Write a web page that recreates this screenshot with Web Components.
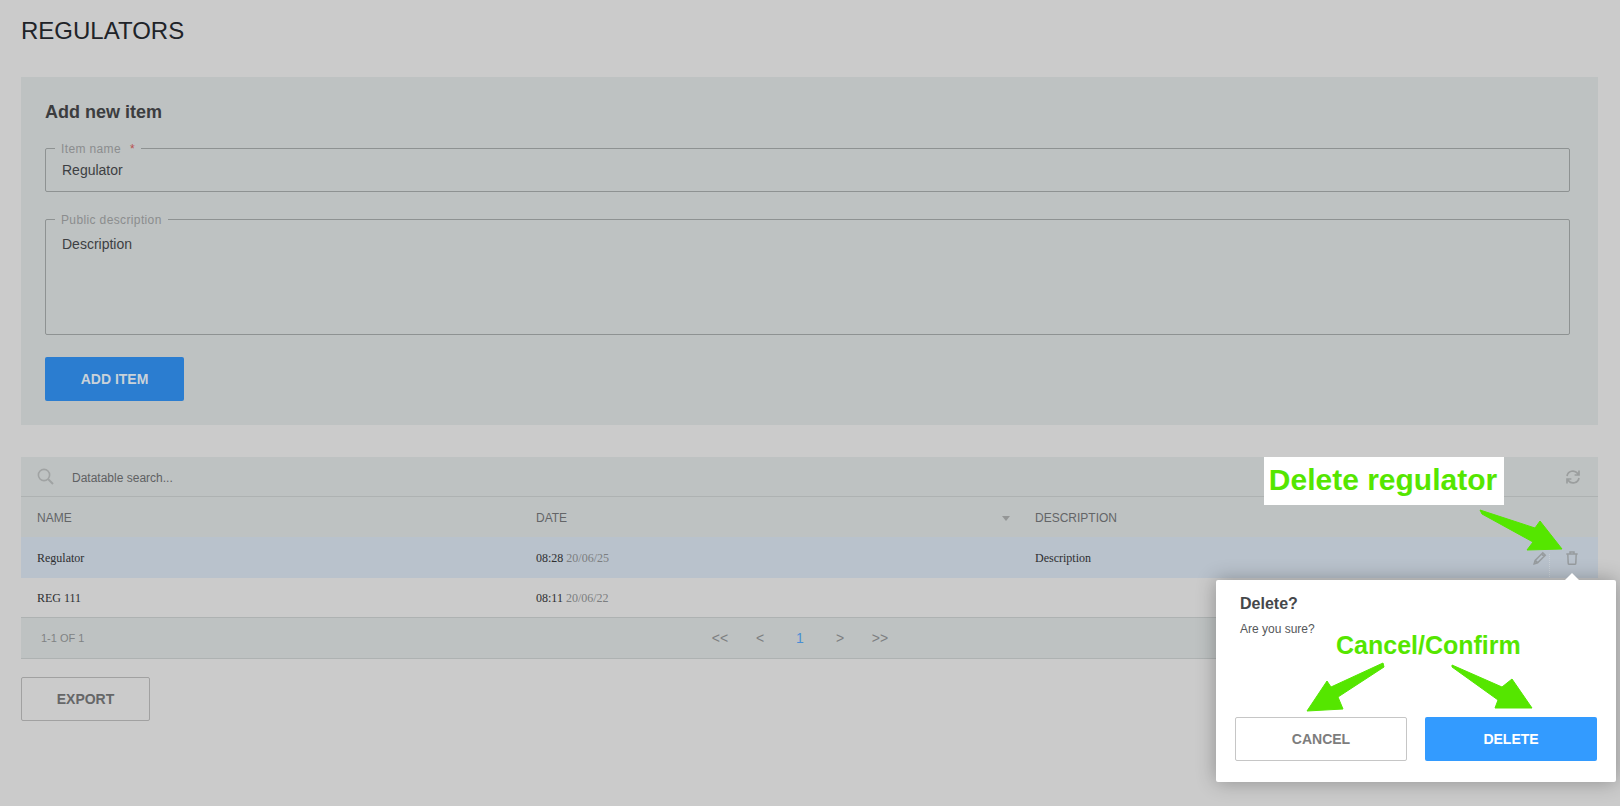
<!DOCTYPE html>
<html>
<head>
<meta charset="utf-8">
<title>Regulators</title>
<style>
html,body{margin:0;padding:0;height:806px;overflow:hidden;background:#cbcbcb;}
body{position:relative;font-family:"Liberation Sans",Arial,sans-serif;}
</style>
</head>
<body>
<reg-page>
  <add-panel></add-panel>
  <data-table></data-table>
  <ui-button kind="outline" w="129" style="margin-top:18px">EXPORT</ui-button>
</reg-page>
<delete-popover></delete-popover>
<note-layer></note-layer>

<script>
class RegPage extends HTMLElement {
  constructor(){
    super();
    this.attachShadow({mode:"open"});
  }
  connectedCallback(){
    this.shadowRoot.innerHTML = `
    <style>
    :host{display:block;padding:0 22px 0 21px;}
    h1{
      margin:0;
      height:77px;
      box-sizing:border-box;
      padding-top:17px;
      font:400 24px/28px "Liberation Sans",Arial,sans-serif;
      color:#202328;
    }
    </style>
    <h1>REGULATORS</h1>
    <slot></slot>`;
  }
}

class OutlinedField extends HTMLElement {
  constructor(){
    super();
    this.attachShadow({mode:"open"});
  }
  connectedCallback(){
    const req = this.hasAttribute("required") ? `<b>*</b>` : "";
    this.shadowRoot.innerHTML = `
    <style>
    :host{display:block;position:relative;box-sizing:border-box;border:1px solid #8e9292;border-radius:2px;
      padding:0 16px;height:var(--h,44px);color:#3d3f42;font-size:14px;line-height:43px;}
    label{position:absolute;left:9px;top:-7px;padding:0 6px;height:14px;background:#bec2c2;
      font-size:12px;line-height:14px;color:#8b8d8e;letter-spacing:.37px;white-space:nowrap;}
    b{font-weight:400;color:#b9514f;margin-left:9px;}
    </style>
    <label>${this.getAttribute("label")}${req}</label>
    <slot></slot>`;
  }
}

class UiButton extends HTMLElement {
  constructor(){
    super();
    this.attachShadow({mode:"open"});
  }
  connectedCallback(){
    const w = this.getAttribute("w") || "139";
    this.shadowRoot.innerHTML = `
    <style>
    :host{display:flex;align-items:center;justify-content:center;box-sizing:border-box;
      width:${w}px;height:44px;border-radius:2px;font:700 14px/16px "Liberation Sans",Arial,sans-serif;}
    :host([kind=primary]){background:#2b7dd0;color:#c9d2d9;}
    :host([kind=outline]){border:1px solid #a1a1a1;color:#666768;}
    :host([kind=pop-outline]){border:1px solid #c6c6c6;color:#7d7d7d;background:#fff;}
    :host([kind=pop-primary]){background:#339bff;color:#fff;}
    </style>
    <slot></slot>`;
  }
}

class AddPanel extends HTMLElement {
  constructor(){
    super();
    this.attachShadow({mode:"open"});
  }
  connectedCallback(){
    this.shadowRoot.innerHTML = `
    <style>
    :host{display:block;background:#bec2c2;padding:24px 28px 24px 24px;box-sizing:border-box;height:348px;}
    h2{margin:0 0 25px;font:700 18px/22px "Liberation Sans",Arial,sans-serif;color:#3c3d3f;}
    .second{--h:116px;margin-top:27px;line-height:49px;}
    ui-button{margin-top:22px;}
    </style>
    <h2>Add new item</h2>
    <outlined-field label="Item name" required>Regulator</outlined-field>
    <outlined-field class="second" label="Public description">Description</outlined-field>
    <ui-button kind="primary">ADD ITEM</ui-button>`;
  }
}

class DataTable extends HTMLElement {
  constructor(){
    super();
    this.attachShadow({mode:"open"});
  }
  connectedCallback(){
    this.shadowRoot.innerHTML = `
    <style>
    :host{display:block;margin-top:32px;font-family:"Liberation Sans",Arial,sans-serif;}
    .search{display:flex;align-items:center;box-sizing:border-box;height:40px;background:#bec2c2;border-bottom:1px solid #aeb2b2;padding:1px 16px 0;color:#5f6163;font-size:12px;}
    .search svg.glass{margin-right:18px;margin-top:-2px;}
    .search span{flex:1;padding-top:2px;}
    .row{display:grid;grid-template-columns:499px 499px 1fr 80px;align-items:center;}
    .row>div{padding-left:16px;}
    .head{box-sizing:border-box;height:40px;padding-top:1px;background:#bec2c2;color:#636567;font-size:12px;}
    .head .sort{position:relative;}
    .head .sort i{position:absolute;left:482px;top:5px;width:0;height:0;border:4px solid transparent;border-top:5px solid #949696;}
    .body{font:12px/14px "Liberation Serif","Times New Roman",serif;color:#2e2f31;}
    .body em{font-style:normal;color:#7c7e80;}
    .r1{height:41px;background:#b9c2cc;}
    .r2{height:39px;}
    .act{display:flex;justify-content:flex-end;align-items:center;height:100%;padding:0 20px 0 0 !important;}
    .act svg{display:block;}
    .act .sep{border-left:1px dotted #c9d0d6;height:23px;margin:16px 16px 0 1px;}
    .foot{display:flex;align-items:center;position:relative;height:40px;background:#bec2c2;border-top:1px solid #aeb2b2;border-bottom:1px solid #aeb2b2;
      padding-left:20px;font-size:11px;color:#808284;}
    .pager{position:absolute;left:679px;top:0;height:100%;display:flex;align-items:center;font-size:14px;color:#7d7f81;}
    .pager span{width:40px;text-align:center;}
    .pager .on{color:#4a8fd4;}
    </style>
    <div class="search">
      <svg class="glass" width="17" height="17" viewBox="0 0 17 17" fill="none" stroke="#a0a3a3" stroke-width="1.6"><circle cx="7" cy="7" r="5.6"/><path d="M11 11l5 5" stroke-width="2"/></svg>
      <span>Datatable search...</span>
      <svg width="16" height="16" viewBox="0 0 16 16" fill="none" stroke="#9b9e9e" stroke-width="1.7" style="margin-right:1px"><path d="M2 7a6 6 0 0 1 10.6-2.6L14 6M14 1.5V6H9.6"/><path d="M14 9a6 6 0 0 1-10.6 2.6L2 10M2 14.5V10h4.4"/></svg>
    </div>
    <div class="row head">
      <div>NAME</div>
      <div class="sort">DATE<i></i></div>
      <div>DESCRIPTION</div>
      <div></div>
    </div>
    <div class="body">
      <div class="row r1">
        <div>Regulator</div>
        <div>08:28 <em>20/06/25</em></div>
        <div>Description</div>
        <div class="act">
          <svg width="15" height="14" viewBox="0 0 15 14" fill="none" stroke="#979c9f" stroke-width="1.6"><path d="M1.2 12.8l1-3.4 7.6-7.6 2.4 2.4-7.6 7.6zM2.2 9.4l2.4 2.4M8.6 3l2.4 2.4"/></svg>
          <div class="sep"></div>
          <svg width="12" height="14" viewBox="0 0 12 14" fill="none" stroke="#979c9f" stroke-width="1.5"><path d="M.3 3h11.4M4 3V1h4v2M1.8 3l.4 9.2c0 .7.5 1.1 1.1 1.1h5.4c.6 0 1.1-.4 1.1-1.1L10.2 3"/></svg>
        </div>
      </div>
      <div class="row r2">
        <div>REG 111</div>
        <div>08:11 <em>20/06/22</em></div>
        <div></div>
        <div></div>
      </div>
    </div>
    <div class="foot">
      1-1 OF 1
      <div class="pager"><span>&lt;&lt;</span><span>&lt;</span><span class="on">1</span><span>&gt;</span><span>&gt;&gt;</span></div>
    </div>`;
  }
}

class DeletePopover extends HTMLElement {
  constructor(){
    super();
    this.attachShadow({mode:"open"});
  }
  connectedCallback(){
    this.shadowRoot.innerHTML = `
    <style>
    :host{position:absolute;left:1216px;top:580px;width:400px;height:202px;box-sizing:border-box;background:#fff;border-radius:2px;
      box-shadow:0 0 20px rgba(0,0,0,.3);padding:14px 19px 0 19px;font-family:"Liberation Sans",Arial,sans-serif;}
    :host::before{content:"";position:absolute;left:349px;top:-7px;border:7px solid transparent;border-top:0;border-bottom-color:#fff;}
    h3{margin:0 0 0 5px;font:700 16px/20px "Liberation Sans",Arial,sans-serif;color:#45474a;}
    p{margin:8px 0 0 5px;font-size:12px;line-height:14px;color:#55575a;}
    .btns{display:flex;justify-content:space-between;margin-top:81px;}
    </style>
    <h3>Delete?</h3>
    <p>Are you sure?</p>
    <div class="btns">
      <ui-button kind="pop-outline" w="172">CANCEL</ui-button>
      <ui-button kind="pop-primary" w="172">DELETE</ui-button>
    </div>`;
  }
}

// las flechas y textos verdes van encima de todo
class NoteLayer extends HTMLElement {
  constructor(){
    super();
    this.attachShadow({mode:"open"});
  }
  connectedCallback(){
    this.shadowRoot.innerHTML = `
    <style>
    :host{position:absolute;left:0;top:0;width:1620px;height:806px;pointer-events:none;}
    svg{position:absolute;left:0;top:0;}
    div{position:absolute;font:700 30px/46px "Liberation Sans",Arial,sans-serif;color:#55e600;white-space:nowrap;}
    .a{left:1264px;top:457px;width:238px;padding-right:2px;height:48px;background:#fff;text-align:center;}
    .b{left:1336px;top:630px;font-size:25px;line-height:30px;}
    </style>
    <svg width="1620" height="806" fill="#55e600" stroke="#55e600" stroke-width="1" stroke-linejoin="round">
      <polygon points="1480,510 1535,528 1540,521 1562,549 1527,550 1533,542 1482,514"/>
      <polygon points="1383,663 1384,667 1338,697 1343,709 1307,711 1327,681 1331,687"/>
      <polygon points="1452,665 1502,687 1512,679 1532,708 1495,708 1498,700 1452,667"/>
    </svg>
    <div class="a">Delete regulator</div>
    <div class="b">Cancel/Confirm</div>`;
  }
}

customElements.define("reg-page", RegPage);
customElements.define("outlined-field", OutlinedField);
customElements.define("ui-button", UiButton);
customElements.define("add-panel", AddPanel);
customElements.define("data-table", DataTable);
customElements.define("delete-popover", DeletePopover);
customElements.define("note-layer", NoteLayer);
</script>
</body>
</html>
